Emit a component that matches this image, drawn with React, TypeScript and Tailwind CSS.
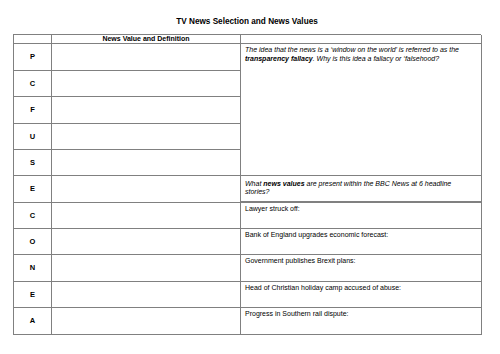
const letters = ['P', 'C', 'F', 'U', 'S', 'E', 'C', 'O', 'N', 'E', 'A'];

const stories = [
  'Lawyer struck off:',
  'Bank of England upgrades economic forecast:',
  'Government publishes Brexit plans:',
  'Head of Christian holiday camp accused of abuse:',
  'Progress in Southern rail dispute:',
];

export default function App() {
  return (
    <div className="w-[500px] h-[354px] bg-white font-['Liberation_Sans',Arial,sans-serif] text-black">
      <div className="ml-[13px] w-[468px]">
        <div className="h-[34px] pt-[17px] text-center text-[8.2px] font-bold leading-[10px]">
          TV News Selection and News Values
        </div>

        <div className="grid grid-cols-[38px_189px_241px] grid-rows-[9px_27px_26px_27px_26px_26px_27px_26px_26px_27px_26px_27px] border-l border-t border-[#808080]">
          {/* header row */}
          <div className="border-r border-b border-[#808080]" />
          <div className="border-r border-b border-[#808080] text-center text-[7px] font-bold leading-[8px]">
            News Value and Definition
          </div>
          <div className="border-r border-b border-[#808080]" />

          {letters.map((l, i) => (
            <div
              key={`l${i}`}
              className="col-start-1 flex items-center justify-center border-r border-b border-[#808080] text-[7.5px] font-bold"
              style={{ gridRowStart: i + 2 }}
            >
              {l}
            </div>
          ))}
          {letters.map((_, i) => (
            <div
              key={`d${i}`}
              className="col-start-2 border-r border-b border-[#808080]"
              style={{ gridRowStart: i + 2 }}
            />
          ))}

          <div className="col-start-3 row-start-2 row-span-5 border-r border-b border-[#808080] pl-[4px] pr-[14px] pt-[1px] text-[7px] italic leading-[9px]">
            The idea that the news is a ‘window on the world’ is referred to as the{' '}
            <b>transparency fallacy</b>. Why is this idea a fallacy or ‘falsehood?
          </div>
          <div className="col-start-3 row-start-7 border-r border-b-2 border-[#808080] pl-[4px] pr-[18px] pt-[4px] text-[7px] italic leading-[8px]">
            What <b>news values</b> are present within the BBC News at 6 headline stories?
          </div>
          {stories.map((s, i) => (
            <div
              key={`s${i}`}
              className="col-start-3 border-r border-b border-[#808080] px-[4px] pt-[1px] text-[7px] leading-[9px]"
              style={{ gridRowStart: i + 8 }}
            >
              {s}
            </div>
          ))}
        </div>
      </div>
    </div>
  );
}
